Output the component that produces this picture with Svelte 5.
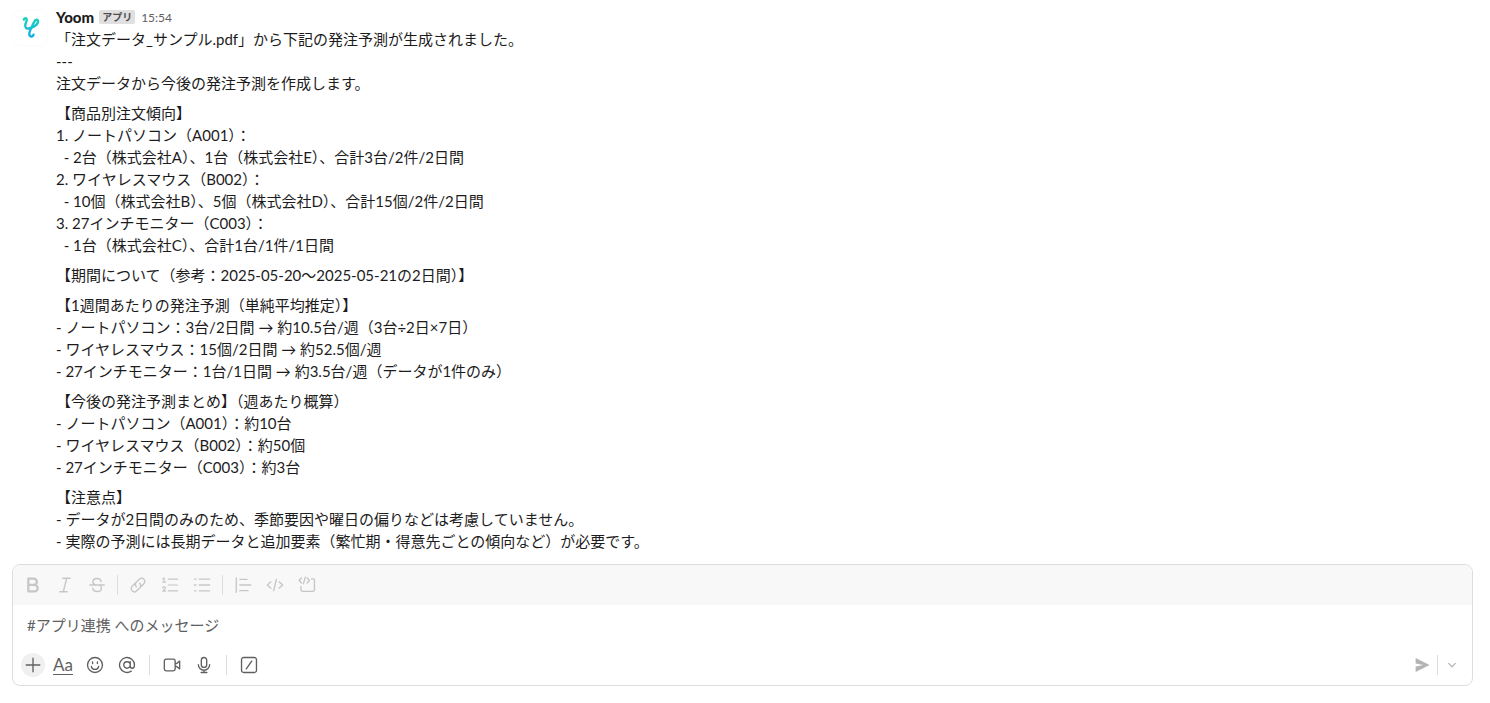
<script>
  const paragraphs = [
    [
      '「注文データ_サンプル.pdf」から下記の発注予測が生成されました。',
      '---',
      '注文データから今後の発注予測を作成します。',
    ],
    [
      '【商品別注文傾向】',
      '1. ノートパソコン（A001）：',
      '  - 2台（株式会社A）、1台（株式会社E）、合計3台/2件/2日間',
      '2. ワイヤレスマウス（B002）：',
      '  - 10個（株式会社B）、5個（株式会社D）、合計15個/2件/2日間',
      '3. 27インチモニター（C003）：',
      '  - 1台（株式会社C）、合計1台/1件/1日間',
    ],
    ['【期間について（参考：2025-05-20〜2025-05-21の2日間）】'],
    [
      '【1週間あたりの発注予測（単純平均推定）】',
      '- ノートパソコン：3台/2日間 → 約10.5台/週（3台÷2日×7日）',
      '- ワイヤレスマウス：15個/2日間 → 約52.5個/週',
      '- 27インチモニター：1台/1日間 → 約3.5台/週（データが1件のみ）',
    ],
    [
      '【今後の発注予測まとめ】（週あたり概算）',
      '- ノートパソコン（A001）：約10台',
      '- ワイヤレスマウス（B002）：約50個',
      '- 27インチモニター（C003）：約3台',
    ],
    [
      '【注意点】',
      '- データが2日間のみのため、季節要因や曜日の偏りなどは考慮していません。',
      '- 実際の予測には長期データと追加要素（繁忙期・得意先ごとの傾向など）が必要です。',
    ],
  ];

  // Stroke paths on a 20 x 20 grid
  const icons = {
    bold: 'M4.800 2.900h6a3.500 3.500 0 0 1 0 7h-6zM4.800 9.900h6.800a3.600 3.600 0 0 1 0 7.200H4.800z',
    italic: 'M7.500 2.500h8.200M4.300 17.500h8.200M11.900 2.500l-3.800 15',
    strike: 'M2 10h16M14.600 6.200C14.200 4 12.400 2.800 10 2.800c-2.700 0-4.600 1.400-4.600 3.700 0 1.700 1 2.900 3.100 3.500M5.200 13.500c.3 2.300 2.200 3.700 4.900 3.700 2.800 0 4.800-1.400 4.800-3.700 0-1.600-.8-2.700-2.400-3.500',
    link: 'M8.200 11.900a3.700 3.700 0 0 1 0-5.200l3.200-3.200a3.600 3.600 0 0 1 5.100 5.100l-3 3M11.800 8.100a3.700 3.700 0 0 1 0 5.200l-3.200 3.200a3.600 3.600 0 0 1-5.100-5.100l3-3',
    ordered: 'M8 3.500h10.500M8 10h10.500M8 16.500h10.500M2 3.200l1.500-1v4.600M1.800 6.800h3.400M1.900 13.200c.3-1.500 3-1.400 3 .2 0 1.200-1.500 1.900-3 3.400h3.300',
    bullet: 'M7 3.500h11.500M7 10h11.500M7 16.500h11.500M1.700 3.500h1.600M1.700 10h1.600M1.700 16.500h1.600',
    quote: 'M2.500 2v16M6.500 3.700h8M6.500 10h12M6.500 16.300h9',
    code: 'M5.500 6.500L1.500 10l4 3.500M14.500 6.500l4 3.500-4 3.500M11.500 3.800l-3 12.400',
    block: 'M3.800 2.200L1.200 5l2.600 2.800M10.200 2.200L12.800 5l-2.600 2.800M8.200 1.200L5.900 8.800M15 3.200h1.700a1.600 1.600 0 0 1 1.600 1.600v10.600a1.600 1.600 0 0 1-1.600 1.600H4.900a1.600 1.600 0 0 1-1.600-1.600V11.500',
    plus: 'M10 2.500v15M2.500 10h15',
    emoji: 'M10 1.700a8.300 8.300 0 1 0 0 16.600 8.300 8.300 0 0 0 0-16.600zM7.300 6.700v1.600M12.700 6.700v1.600M6 11.700c.4 2 2 3.200 4 3.200s3.600-1.200 4-3.200',
    mention: 'M10 6.400a3.600 3.600 0 1 0 0 7.200 3.600 3.600 0 0 0 0-7.200zM13.600 6.200v5c0 1.500.8 2.400 2.100 2.400 1.600 0 2.600-1.400 2.600-3.600a8.300 8.300 0 1 0-3.600 6.800',
    video: 'M3.500 3.500h8a2 2 0 0 1 2 2v9a2 2 0 0 1-2 2h-8a2 2 0 0 1-2-2v-9a2 2 0 0 1 2-2zM13.700 8.300h1.500l3.300-2.600v8.600l-3.300-2.600h-1.500',
    mic: 'M10 1.700a3 3 0 0 1 3 3v5a3 3 0 0 1-6 0v-5a3 3 0 0 1 3-3zM3.700 9.500a6.300 6.300 0 0 0 12.600 0M10 15.800v2.500M6.800 18.300h6.400',
    slash: 'M4 1.700h12A2.300 2.300 0 0 1 18.300 4v12a2.300 2.300 0 0 1-2.300 2.300H4A2.300 2.300 0 0 1 1.700 16V4A2.300 2.300 0 0 1 4 1.700zM13 5.700L7 14.300',
    chevron: 'M5.800 8l4.200 4.200L14.200 8',
  };

  const formatGroups = [
    [['bold', '太字'], ['italic', '斜体'], ['strike', '取り消し線']],
    [['link', 'リンク'], ['ordered', '順序付きリスト'], ['bullet', '箇条書き']],
    [['quote', '引用'], ['code', 'コード'], ['block', 'コードブロック']],
  ];

  const actionGroups = [
    [['plus', '添付する'], ['format', '書式設定'], ['emoji', '絵文字'], ['mention', 'メンション']],
    [['video', 'ビデオ'], ['mic', '音声']],
    [['slash', 'ショートカット']],
  ];
</script>

{#snippet icon(name)}
  <svg class="icon {name}" viewBox="0 0 20 20" aria-hidden="true"><path d={icons[name]} /></svg>
{/snippet}

<main lang="ja">
  <article class="message">
    <svg class="avatar" viewBox="0 0 36 36" aria-hidden="true">
      <defs>
        <linearGradient id="mark" x1="0" y1="0" x2="0" y2="1">
          <stop offset="0" stop-color="#1cd2bd" />
          <stop offset="1" stop-color="#12aee6" />
        </linearGradient>
      </defs>
      <rect x=".5" y=".5" width="35" height="35" rx="7.500" fill="#fff" stroke="#fbfbfb" />
      <path
        d="M11.800 9.600C12.800 7.700 15.100 7.800 14.700 10.300L13.400 14.300C12.700 17.300 14.200 19 16.600 18.500C20.800 17.600 26 14.800 26.100 11.400C26.100 9 23.400 9.300 22.100 12L19.700 17C18.300 20 17.300 21.800 17.300 23.900C17.300 27 21.300 27.300 21.500 24.700"
        fill="none" stroke="url(#mark)" stroke-width="2.400" stroke-linecap="round" stroke-linejoin="round"
      />
    </svg>
    <div class="content">
      <header>
        <strong>Yoom</strong>
        <span class="badge">アプリ</span>
        <time datetime="15:54">15:54</time>
      </header>
      <div class="body">
        {#each paragraphs as lines}
          <p>{lines.join('\n')}</p>
        {/each}
      </div>
    </div>
  </article>

  <form class="composer" onsubmit={(e) => e.preventDefault()}>
    <div class="bar formatting">
      {#each formatGroups as group, i}
        {#if i > 0}<span class="divider"></span>{/if}
        {#each group as [name, label]}
          <button type="button" aria-label={label}>{@render icon(name)}</button>
        {/each}
      {/each}
    </div>
    <input type="text" aria-label="メッセージ" placeholder="#アプリ連携 へのメッセージ" />
    <div class="bar actions">
      {#each actionGroups as group, i}
        {#if i > 0}<span class="divider"></span>{/if}
        {#each group as [name, label]}
          <button type="button" class="{name}-button" aria-label={label}>
            {#if name === 'format'}<span class="letters">Aa</span>{:else}{@render icon(name)}{/if}
          </button>
        {/each}
      {/each}
      <div class="send">
        <button type="submit" aria-label="送信">
          <svg class="icon" viewBox="0 0 20 20" aria-hidden="true">
            <path class="solid" d="M1.800 2.300L17.300 10 1.800 17.700v-5.900L10.300 10 1.800 8.200z" />
          </svg>
        </button>
        <span class="divider"></span>
        <button type="button" class="more" aria-label="送信オプション">{@render icon('chevron')}</button>
      </div>
    </div>
  </form>
</main>

<style>
  :global(body) {
    margin: 0;
    background: #fff;
  }

  main {
    padding: 6px 17px 17px 12px;
    color: #1d1c1d;
    font: 15px/22px Lato, "Noto Sans CJK JP", sans-serif;
  }

  .message {
    display: flex;
    gap: 8px;
  }

  .avatar {
    flex: none;
    width: 36px;
    height: 36px;
    margin-top: 4px;
  }

  .content {
    flex: 1;
    min-width: 0;
  }

  header {
    display: flex;
    align-items: center;
    height: 22px;
  }

  strong {
    font-weight: 900;
  }

  .badge {
    margin: 0 6px 0 5px;
    padding: 0 3px;
    border-radius: 2px;
    background: #e0e0e0;
    color: #504e50;
    font-size: 10px;
    font-weight: 700;
    line-height: 14px;
  }

  time {
    padding-top: 2px;
    color: #616061;
    font-size: 12px;
  }

  p {
    margin: 0 0 8px;
    white-space: pre-wrap;
  }

  p:last-child {
    margin-bottom: 0;
  }

  .composer {
    margin-top: 12px;
    border: 1px solid #dddddd;
    border-radius: 8px;
    overflow: hidden;
  }

  .bar {
    display: flex;
    align-items: center;
    gap: 4px;
    height: 40px;
    padding: 0 6px;
  }

  .formatting {
    background: #f8f8f8;
    color: #c6c6c6;
  }

  .actions {
    color: #616061;
  }

  button {
    display: flex;
    flex: none;
    align-items: center;
    justify-content: center;
    width: 28px;
    height: 28px;
    padding: 0;
    border: 0;
    background: none;
    color: inherit;
    font: inherit;
  }

  .icon {
    display: block;
    width: 18px;
    height: 18px;
    fill: none;
    stroke: currentColor;
    stroke-width: 1.500;
    stroke-linecap: round;
    stroke-linejoin: round;
  }

  .bold {
    stroke-width: 2.500;
  }

  .ordered {
    stroke-width: 1.300;
  }

  .solid {
    fill: currentColor;
    stroke: none;
  }

  .divider {
    width: 1px;
    height: 20px;
    margin: 0 2px;
    background: #dddddd;
  }

  .actions > .divider {
    margin: 0 4px;
  }

  .plus-button {
    width: 24px;
    height: 24px;
    margin: 0 0 0 2px;
    border-radius: 50%;
    background: #f0f0f0;
  }

  .letters {
    border-bottom: 1px solid currentColor;
    font-size: 17px;
    line-height: 18px;
  }

  input {
    box-sizing: border-box;
    display: block;
    width: 100%;
    height: 40px;
    padding: 0 14px;
    border: 0;
    outline: 0;
    background: none;
    color: inherit;
    font: inherit;
  }

  input::placeholder {
    color: #616061;
    opacity: 1;
  }

  .send {
    display: flex;
    align-items: center;
    margin-left: auto;
    color: #b4b4b4;
  }

  .send .divider {
    margin: 0;
  }

  .more .chevron {
    width: 16px;
    height: 16px;
  }
</style>
